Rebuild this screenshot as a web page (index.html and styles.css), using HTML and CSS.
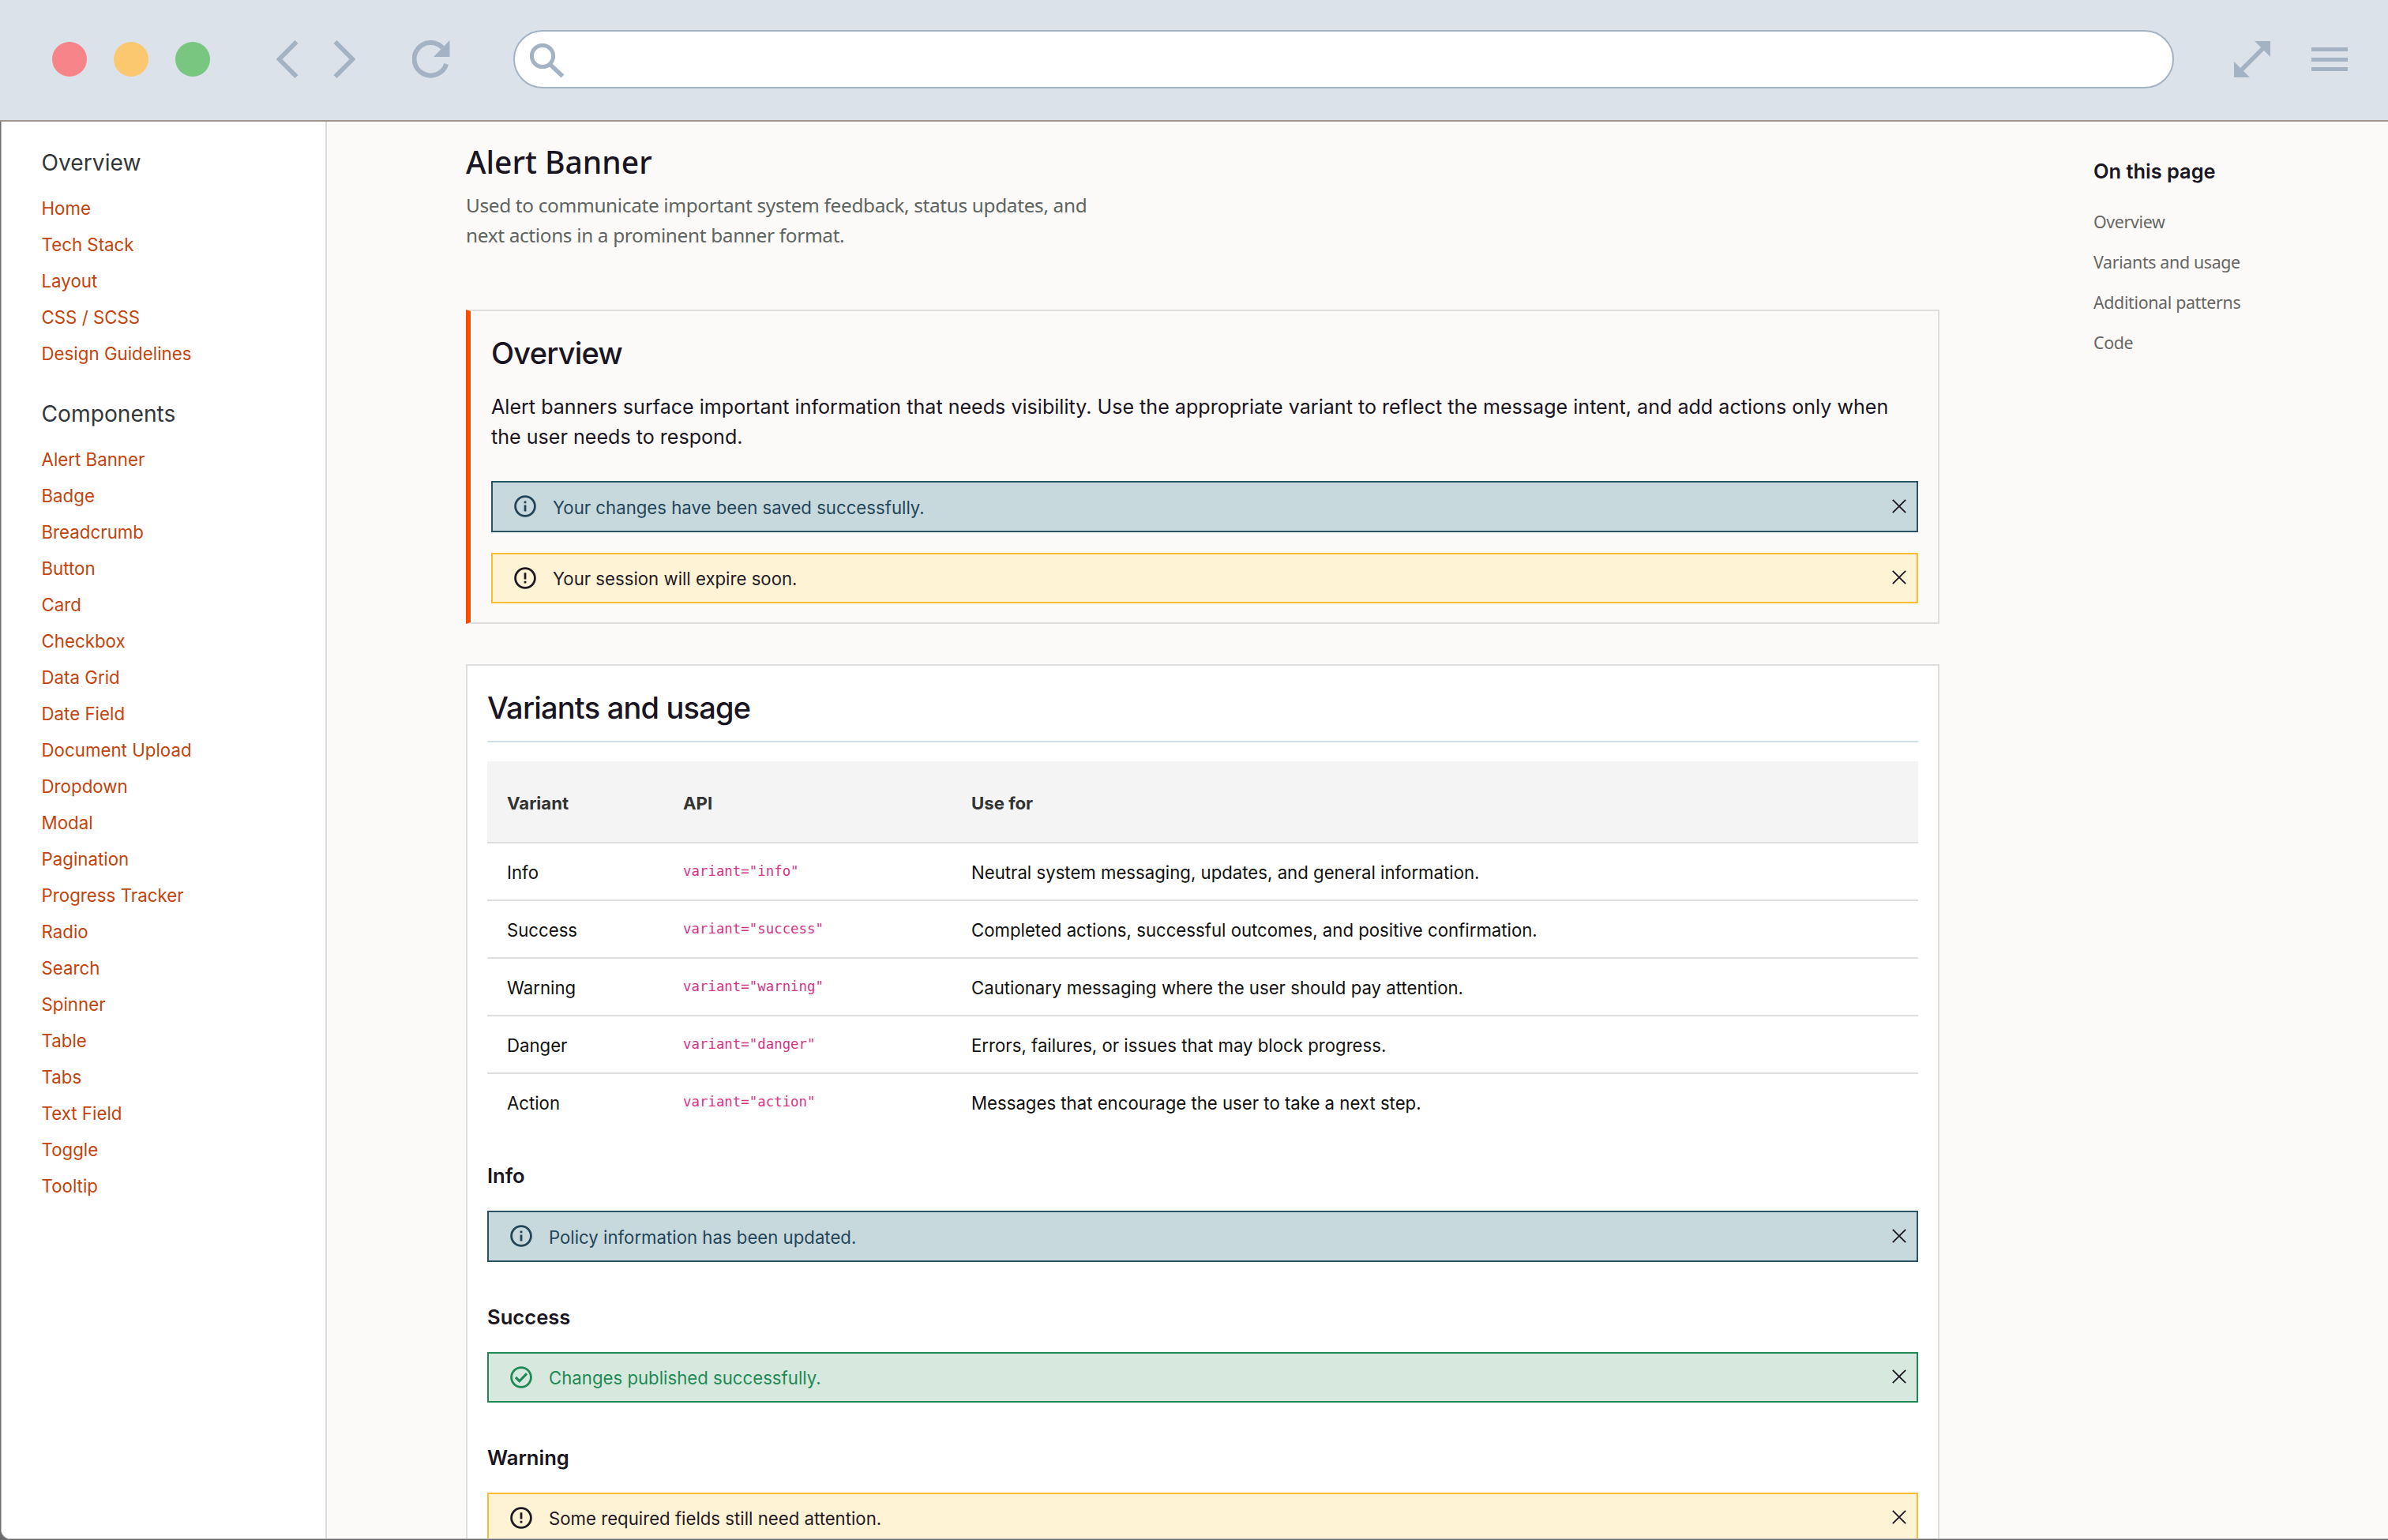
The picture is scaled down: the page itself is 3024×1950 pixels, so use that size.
FILE: index.html
```html
<!DOCTYPE html>
<html lang="en">
<head>
  <meta charset="UTF-8">
  <meta name="viewport" content="width=device-width, initial-scale=1.0">
  <title>Alert Banner</title>
  <link rel="stylesheet" href="styles.css">
</head>
<body>
  <svg class="sprite" aria-hidden="true">
    <symbol id="icon-info" viewBox="0 0 28 28">
      <circle cx="14" cy="14" r="12.4" fill="none" stroke="currentColor" stroke-width="2.8"/>
      <path d="M12.6 12.4h2.8v8h-2.8zM12.6 7.4h2.8v2.8h-2.8z" fill="currentColor"/>
    </symbol>
    <symbol id="icon-warning" viewBox="0 0 28 28">
      <circle cx="14" cy="14" r="12.4" fill="none" stroke="currentColor" stroke-width="2.8"/>
      <path d="M12.6 7.2h2.8v8.2h-2.8zM12.6 17.8h2.8v2.8h-2.8z" fill="currentColor"/>
    </symbol>
    <symbol id="icon-success" viewBox="0 0 28 28">
      <circle cx="14" cy="14" r="12.4" fill="none" stroke="currentColor" stroke-width="2.8"/>
      <path d="M7 14l4.8 4.8L21 9.4" fill="none" stroke="currentColor" stroke-width="3.2"/>
    </symbol>
    <symbol id="icon-close" viewBox="0 0 18 18">
      <path d="M.8.8l16.4 16.4M17.2.8L.8 17.2" fill="none" stroke="currentColor" stroke-width="1.8"/>
    </symbol>
  </svg>

  <header class="browser-bar">
    <div class="dots">
      <span class="dot red"></span>
      <span class="dot yellow"></span>
      <span class="dot green"></span>
    </div>
    <svg class="icon-back" width="28" height="48" viewBox="0 0 28 48"><path d="M25.5 2L3.5 24l22 22" fill="none" stroke="currentColor" stroke-width="5.8"/></svg>
    <svg class="icon-forward" width="28" height="48" viewBox="0 0 28 48"><path d="M2.5 2l22 22-22 22" fill="none" stroke="currentColor" stroke-width="5.8"/></svg>
    <svg class="icon-reload" width="48" height="48" viewBox="0 0 48 48">
      <path d="M43.2 30A20.8 20.8 0 1 1 38.5 9.5" fill="none" stroke="currentColor" stroke-width="6"/>
      <path d="M47.5 0v21H27z" fill="currentColor"/>
    </svg>
    <div class="address">
      <svg width="46" height="44" viewBox="0 0 46 44">
        <circle cx="17" cy="16" r="13.6" fill="none" stroke="currentColor" stroke-width="5"/>
        <path d="M27 27l15.5 14.5" fill="none" stroke="currentColor" stroke-width="5.4"/>
      </svg>
    </div>
    <svg class="icon-expand" width="46" height="46" viewBox="0 0 46 46">
      <path d="M8 38L38 8" stroke="currentColor" stroke-width="5.4"/>
      <path d="M26 0h20v20zM0 26v20h20z" fill="currentColor"/>
    </svg>
    <div class="menu"><span></span><span></span><span></span></div>
  </header>

  <div class="window">
    <nav class="sidebar">
      <h2>Overview</h2>
      <ul>
        <li><a>Home</a></li>
        <li><a>Tech Stack</a></li>
        <li><a>Layout</a></li>
        <li><a>CSS / SCSS</a></li>
        <li><a>Design Guidelines</a></li>
      </ul>
      <h2>Components</h2>
      <ul>
        <li><a>Alert Banner</a></li>
        <li><a>Badge</a></li>
        <li><a>Breadcrumb</a></li>
        <li><a>Button</a></li>
        <li><a>Card</a></li>
        <li><a>Checkbox</a></li>
        <li><a>Data Grid</a></li>
        <li><a>Date Field</a></li>
        <li><a>Document Upload</a></li>
        <li><a>Dropdown</a></li>
        <li><a>Modal</a></li>
        <li><a>Pagination</a></li>
        <li><a>Progress Tracker</a></li>
        <li><a>Radio</a></li>
        <li><a>Search</a></li>
        <li><a>Spinner</a></li>
        <li><a>Table</a></li>
        <li><a>Tabs</a></li>
        <li><a>Text Field</a></li>
        <li><a>Toggle</a></li>
        <li><a>Tooltip</a></li>
      </ul>
    </nav>

    <main class="content">
      <h1>Alert Banner</h1>
      <p class="lead">Used to communicate important system feedback, status updates, and next actions in a prominent banner format.</p>

      <section class="card overview">
        <h2>Overview</h2>
        <p>Alert banners surface important information that needs visibility. Use the appropriate variant to reflect the message intent, and add actions only when the user needs to respond.</p>
        <div class="alert info">
          <svg class="alert-icon"><use href="#icon-info"/></svg>
          <span class="alert-text">Your changes have been saved successfully.</span>
          <svg class="close"><use href="#icon-close"/></svg>
        </div>
        <div class="alert warning">
          <svg class="alert-icon"><use href="#icon-warning"/></svg>
          <span class="alert-text">Your session will expire soon.</span>
          <svg class="close"><use href="#icon-close"/></svg>
        </div>
      </section>

      <section class="card variants">
        <h2>Variants and usage</h2>
        <table>
          <thead>
            <tr><th class="col-variant">Variant</th><th class="col-api">API</th><th>Use for</th></tr>
          </thead>
          <tbody>
            <tr><td>Info</td><td><code>variant="info"</code></td><td>Neutral system messaging, updates, and general information.</td></tr>
            <tr><td>Success</td><td><code>variant="success"</code></td><td>Completed actions, successful outcomes, and positive confirmation.</td></tr>
            <tr><td>Warning</td><td><code>variant="warning"</code></td><td>Cautionary messaging where the user should pay attention.</td></tr>
            <tr><td>Danger</td><td><code>variant="danger"</code></td><td>Errors, failures, or issues that may block progress.</td></tr>
            <tr><td>Action</td><td><code>variant="action"</code></td><td>Messages that encourage the user to take a next step.</td></tr>
          </tbody>
        </table>

        <h3>Info</h3>
        <div class="alert info">
          <svg class="alert-icon"><use href="#icon-info"/></svg>
          <span class="alert-text">Policy information has been updated.</span>
          <svg class="close"><use href="#icon-close"/></svg>
        </div>
        <h3>Success</h3>
        <div class="alert success">
          <svg class="alert-icon"><use href="#icon-success"/></svg>
          <span class="alert-text">Changes published successfully.</span>
          <svg class="close"><use href="#icon-close"/></svg>
        </div>
        <h3>Warning</h3>
        <div class="alert warning">
          <svg class="alert-icon"><use href="#icon-warning"/></svg>
          <span class="alert-text">Some required fields still need attention.</span>
          <svg class="close"><use href="#icon-close"/></svg>
        </div>
      </section>
    </main>

    <aside class="toc">
      <h2>On this page</h2>
      <ul>
        <li><a>Overview</a></li>
        <li><a>Variants and usage</a></li>
        <li><a>Additional patterns</a></li>
        <li><a>Code</a></li>
      </ul>
    </aside>
  </div>
</body>
</html>
```
FILE: styles.css
```css
* {
  box-sizing: border-box;
}

body {
  margin: 0;
  height: 1950px;
  overflow: hidden;
  background-color: #6b6b6d;
  font-family: Inter, sans-serif;
  color: #1a1523;
}

h1, h2, h3, p, ul {
  margin: 0;
  padding: 0;
  list-style: none;
}

.sprite {
  display: none;
}

/* Browser chrome */
.browser-bar {
  display: flex;
  align-items: center;
  height: 154px;
  padding: 0 51px 2px 66px;
  background-color: #dbe2ea;
  border-bottom: 2px solid #a0968f;
  color: #a3b3c4;
}

.dots {
  display: flex;
  gap: 34px;
}

.dot {
  width: 44px;
  height: 44px;
  border-radius: 50%;
}

.dot.red {
  background-color: #f68489;
}

.dot.yellow {
  background-color: #fbc870;
}

.dot.green {
  background-color: #78c680;
}

.icon-back {
  margin-left: 84px;
}

.icon-forward {
  margin-left: 44px;
}

.icon-reload {
  margin-left: 72px;
}

.address {
  flex: 1;
  display: flex;
  align-items: center;
  height: 74px;
  margin-left: 80px;
  padding: 4px 18px 0;
  background-color: #fff;
  border: 2px solid #a3b3c4;
  border-radius: 37px;
}

.icon-expand {
  margin-left: 76px;
}

.menu {
  display: flex;
  flex-direction: column;
  gap: 7.5px;
  width: 46px;
  margin-left: 52px;
}

.menu span {
  height: 5px;
  background-color: #a3b3c4;
}

/* Page */
.window {
  display: flex;
  height: 1795px;
  margin-left: 1px;
  overflow: hidden;
  background-color: #fcfaf8;
  border-left: 1px solid #b5b5b5;
  border-bottom: 1px solid #b5b5b5;
  border-bottom-left-radius: 12px;
}

.sidebar {
  flex: none;
  width: 412px;
  padding: 32px 0 0 50.5px;
  background-color: #fff;
  border-right: 2px solid #dcdcdc;
}

.sidebar h2 {
  font-size: 28.2px;
  font-weight: 400;
  line-height: 40px;
  color: #33373b;
}

.sidebar ul {
  padding: 15px 0 33px;
}

.sidebar li {
  height: 46px;
  font-size: 22.3px;
  line-height: 46px;
  color: #c2440c;
}

.content {
  flex: none;
  width: 1866px;
  margin-left: 176px;
  padding-top: 25px;
}

h1 {
  font-family: "Noto Sans", sans-serif;
  font-size: 39px;
  font-weight: 500;
  line-height: 52px;
}

.lead {
  width: 800px;
  margin-top: 10px;
  font-family: "Noto Sans", sans-serif;
  font-size: 24.4px;
  line-height: 38.2px;
  letter-spacing: -0.35px;
  color: #5d6462;
}

.card {
  border: 2px solid #dedede;
}

.card h2 {
  font-size: 38px;
  font-weight: 500;
  line-height: 46px;
  letter-spacing: -0.8px;
}

.overview {
  height: 398px;
  margin-top: 75px;
  padding: 30px 25px 0 26px;
  border-left: 6px solid #ff4b00;
}

.overview p {
  margin: 26px 0 37px;
  font-size: 25.1px;
  line-height: 38px;
}

.alert {
  display: flex;
  align-items: center;
  height: 64px;
  padding: 0 13px 0 27px;
  border: 2px solid;
  font-size: 22.2px;
}

.alert-icon {
  width: 28px;
  height: 28px;
  margin-top: -1px;
}

.alert-text {
  margin-left: 21px;
  padding-top: 1px;
}

.close {
  width: 18px;
  height: 18px;
  margin-top: -2px;
  margin-left: auto;
  color: #1a1523;
}

.alert.info {
  height: 65px;
  background-color: #c8d9de;
  border-color: #285463;
  color: #234558;
}

.alert.info .alert-text {
  padding-top: 2px;
}

.alert.warning {
  background-color: #fff3d6;
  border-color: #fbbc34;
  color: #1f1a24;
}

.alert.success {
  background-color: #d7e9df;
  border-color: #1f8a54;
  color: #1f8a54;
}

.overview .alert.warning {
  margin-top: 26px;
}

.variants {
  height: 1200px;
  margin-top: 51px;
  padding: 30px 25px 0;
  background-color: #fff;
}

.variants h2 {
  height: 67px;
  margin-bottom: 24px;
  border-bottom: 2px solid #cfdfe3;
}

table {
  width: 100%;
  border-collapse: collapse;
  table-layout: fixed;
  font-size: 22.2px;
  color: #111;
}

.col-variant {
  width: 223px;
}

.col-api {
  width: 365px;
}

th, td {
  height: 73px;
  padding: 1px 25px 0;
  border-bottom: 2px solid #dedede;
  text-align: left;
}

th {
  height: 103px;
  padding-top: 3px;
  background-color: #f4f4f4;
  font-weight: 700;
  color: #333;
}

tr:last-child td {
  border-bottom: none;
}

code {
  font-family: "DejaVu Sans Mono", monospace;
  font-size: 17.4px;
  vertical-align: 4px;
  color: #d63384;
}

h3 {
  margin: 54px 0 28px;
  font-size: 25.6px;
  font-weight: 600;
  line-height: 32px;
}

table + h3 {
  margin-top: 41px;
}

.toc {
  margin-left: 195px;
  padding-top: 44px;
}

.toc h2 {
  font-size: 25.4px;
  font-weight: 600;
  line-height: 38px;
}

.toc ul {
  margin-top: 19px;
}

.toc li {
  height: 51px;
  font-family: "Noto Sans", sans-serif;
  font-size: 21.4px;
  line-height: 51px;
  letter-spacing: -0.35px;
  color: #666;
}
```
